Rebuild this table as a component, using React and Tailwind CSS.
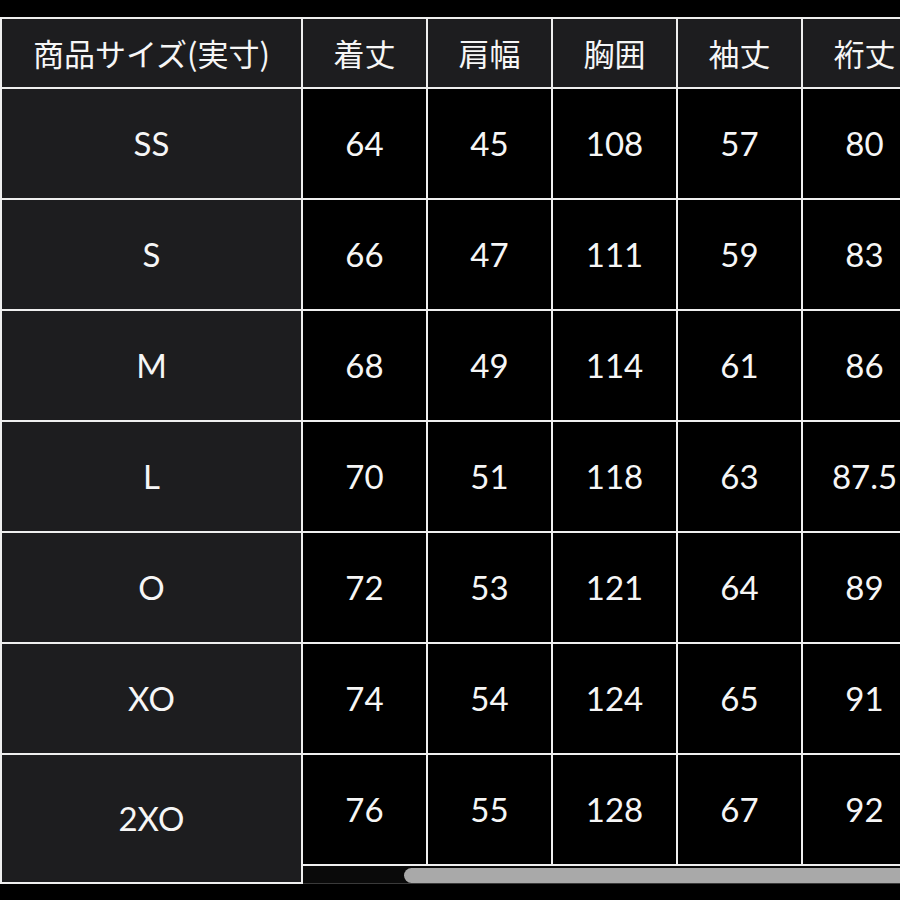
export default function App() {
  const headers = ["着丈", "肩幅", "胸囲", "袖丈", "裄丈"];
  const rows = [
    { size: "SS", values: ["64", "45", "108", "57", "80"] },
    { size: "S", values: ["66", "47", "111", "59", "83"] },
    { size: "M", values: ["68", "49", "114", "61", "86"] },
    { size: "L", values: ["70", "51", "118", "63", "87.5"] },
    { size: "O", values: ["72", "53", "121", "64", "89"] },
    { size: "XO", values: ["74", "54", "124", "65", "91"] },
    { size: "2XO", values: ["76", "55", "128", "67", "92"] },
  ];

  return (
    <div className="w-[900px] h-[900px] bg-black overflow-hidden pt-[17px] font-['Lato','Noto_Sans_CJK_JP',sans-serif] text-[#f6f6f6]">
      <div className="flex items-stretch">
        {/* Sticky size column */}
        <div className="w-[303px] shrink-0 flex flex-col gap-[2px] bg-[#efefef] p-[2px]">
          <div className="h-[68px] bg-[#1d1d1f] flex items-center justify-center text-[31px] font-['Noto_Sans_CJK_JP',sans-serif]">
            商品サイズ(実寸)
          </div>
          {rows.map((row, i) => (
            <div
              key={row.size}
              className={`${
                i === rows.length - 1 ? "flex-1" : "h-[109px]"
              } bg-[#1d1d1f] flex items-center justify-center text-[33px]`}
            >
              {row.size}
            </div>
          ))}
        </div>

        {/* Scrolling columns */}
        <div className="flex flex-col shrink-0">
          <div className="grid grid-cols-[repeat(5,123px)] gap-[2px] bg-[#efefef] pt-[2px] pb-[2px] pr-[2px] w-[625px]">
            {headers.map((h) => (
              <div
                key={h}
                className="h-[68px] bg-[#1d1d1f] flex items-center justify-center text-[31px] font-['Noto_Sans_CJK_JP',sans-serif]"
              >
                {h}
              </div>
            ))}
            {rows.map((row) =>
              row.values.map((v, j) => (
                <div
                  key={row.size + j}
                  className="h-[109px] bg-black flex items-center justify-center text-[33px]"
                >
                  {v}
                </div>
              ))
            )}
          </div>
          {/* Scrollbar */}
          <div className="h-[18px] bg-[#0a0a0a] pt-[2px] flex border-b border-[#3a3a3a]">
            <div className="ml-[101px] h-[15px] w-[600px] rounded-full bg-[#a9a9a9]" />
          </div>
        </div>
      </div>
    </div>
  );
}
